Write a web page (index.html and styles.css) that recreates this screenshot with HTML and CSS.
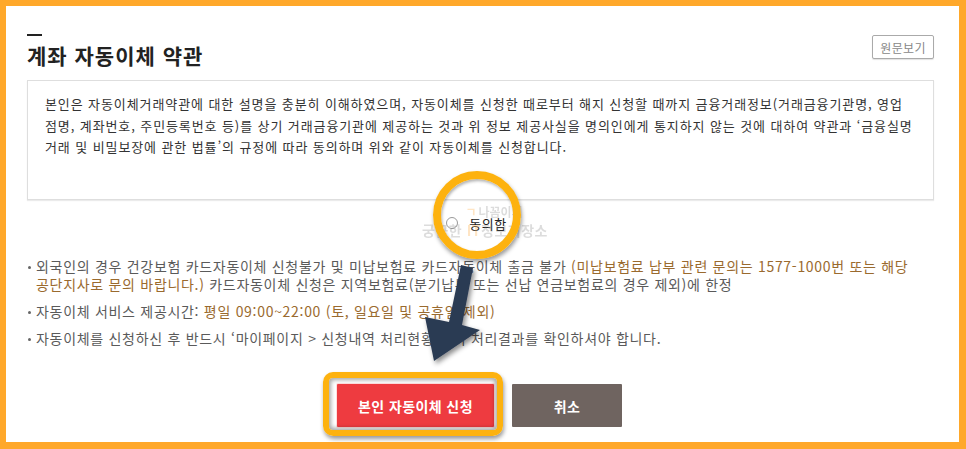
FILE: index.html
```html
<!DOCTYPE html>
<html lang="ko">
<head>
<meta charset="utf-8">
<title>계좌 자동이체 약관</title>
<link rel="stylesheet" href="styles.css">
</head>
<body>
<div class="frame">
  <div class="page">
    <div class="header">
      <div class="title-block">
        <span class="dash"></span>
        <h1 class="title">계좌 자동이체 약관</h1>
      </div>
      <button class="btn-origin" type="button">원문보기</button>
    </div>

    <div class="terms">
      본인은 자동이체거래약관에 대한 설명을 충분히 이해하였으며, 자동이체를 신청한 때로부터 해지 신청할 때까지 금융거래정보(거래금융기관명, 영업<br>
      점명, 계좌번호, 주민등록번호 등)를 상기 거래금융기관에 제공하는 것과 위 정보 제공사실을 명의인에게 통지하지 않는 것에 대하여 약관과 ‘금융실명<br>
      거래 및 비밀보장에 관한 법률’의 규정에 따라 동의하며 위와 같이 자동이체를 신청합니다.
    </div>

    <label class="agree">
      <span class="radio"></span>
      <span class="agree-text">동의함</span>
    </label>

    <ul class="notes">
      <li><span class="gray">외국인의 경우 건강보험 카드자동이체 신청불가 및 미납보험료 카드자동이체 출금 불가 </span><span class="brown">(미납보험료 납부 관련 문의는 1577-1000번 또는 해당<br>공단지사로 문의 바랍니다.)</span><span class="gray"> 카드자동이체 신청은 지역보험료(분기납부 또는 선납 연금보험료의 경우 제외)에 한정</span></li>
      <li><span class="gray">자동이체 서비스 제공시간: </span><span class="brown">평일 09:00~22:00 (토, 일요일 및 공휴일 제외)</span></li>
      <li><span class="gray">자동이체를 신청하신 후 반드시 ‘마이페이지 &gt; 신청내역 처리현황’에서 처리결과를 확인하셔야 합니다.</span></li>
    </ul>

    <div class="actions">
      <div class="btn-wrap">
        <button class="btn btn-apply" type="button">본인 자동이체 신청</button>
        <span class="highlight"></span>
      </div>
      <button class="btn btn-cancel" type="button">취소</button>
    </div>

    <div class="watermark">
      <span class="wm-top"><span class="wm-mark">ㄱ</span>나꼼이의</span>
      <span class="wm-bottom">궁금한 <span class="wm-it">IT</span>정보저장소</span>
    </div>
    <span class="ring"></span>
    <svg class="arrow" width="953" height="436" viewBox="0 0 953 436" aria-hidden="true">
      <defs>
        <filter id="sh" x="-50%" y="-50%" width="200%" height="200%">
          <feDropShadow dx="2" dy="3" stdDeviation="2.5" flood-color="#000" flood-opacity="0.45"/>
        </filter>
      </defs>
      <polygon filter="url(#sh)" fill="#2c3b52" points="455,259 467,262 456,319 474,324 428,355 419,311 443,316"/>
    </svg>
  </div>
</div>
</body>
</html>
```

FILE: styles.css
```css
* { box-sizing: border-box; }

html, body {
  margin: 0;
  padding: 0;
  background: #ffa82a;
}

body {
  font-family: "Noto Sans CJK KR", "Noto Sans", sans-serif;
  color: #333;
}

.frame {
  width: 966px;
  height: 449px;
  padding: 6px 7px 7px 6px;
  background: #ffa82a;
}

.page {
  position: relative;
  height: 100%;
  background: #fff;
  padding: 28px 25px 0 21px;
  overflow: hidden;
}

.header {
  display: flex;
  justify-content: space-between;
  align-items: flex-start;
}

.title-block {
  display: flex;
  flex-direction: column;
}

.dash {
  display: block;
  width: 15px;
  height: 2px;
  background: #222;
}

.title {
  margin: 5px 0 0;
  font-size: 21px;
  line-height: 28px;
  font-weight: 700;
  color: #222;
  letter-spacing: 1px;
}

.btn-origin {
  margin-top: 1px;
  height: 24px;
  padding: 0 7px;
  font-family: inherit;
  font-size: 12px;
  color: #888;
  background: #fff;
  border: 1px solid #aaa;
  border-radius: 2px;
  box-shadow: 0 1px 1px rgba(0, 0, 0, 0.12);
  letter-spacing: 0.4px;
}

.terms {
  margin-top: 11px;
  height: 120px;
  padding: 12px 17px;
  border: 1px solid #dedede;
  box-shadow: 0 1px 1px rgba(0, 0, 0, 0.08);
  font-size: 13px;
  line-height: 21.5px;
  color: #333;
  white-space: nowrap;
  letter-spacing: 0.9px;
}

.agree {
  display: flex;
  justify-content: center;
  align-items: center;
  gap: 11px;
  margin-top: 13px;
  height: 20px;
  padding-right: 8px;
}

.radio {
  width: 12px;
  height: 12px;
  border: 1px solid #999;
  border-radius: 50%;
  background: #fff;
}

.agree-text {
  font-size: 13px;
  color: #222;
  letter-spacing: 0.5px;
}

.notes {
  list-style: none;
  margin: 24px 0 0;
  padding: 0;
  font-size: 14px;
  line-height: 18px;
  letter-spacing: 0.7px;
}

.notes li {
  position: relative;
  padding-left: 9px;
  margin-bottom: 9px;
  white-space: nowrap;
}

.notes li::before {
  content: "";
  position: absolute;
  left: 1px;
  top: 9px;
  width: 3px;
  height: 3px;
  border-radius: 50%;
  background: #666;
}

.gray { color: #5a5a5a; }
.brown { color: #9a6a2e; }

.actions {
  display: flex;
  justify-content: center;
  gap: 18px;
  margin-top: 37px;
  padding-right: 2px;
}

.btn-wrap {
  position: relative;
}

.btn {
  height: 43px;
  border: none;
  font-family: inherit;
  font-size: 14px;
  font-weight: 700;
  color: #fff;
  border-radius: 1px;
  letter-spacing: 0.4px;
}

.btn-apply {
  width: 157px;
  background: #ee3b40;
  box-shadow: 0 0 0 1px rgba(255, 200, 200, 0.6);
}

.btn-cancel {
  width: 110px;
  background: #6f6460;
}

.highlight {
  position: absolute;
  top: -12px;
  left: -14px;
  right: -9px;
  bottom: -9px;
  border: 6px solid #fdb20f;
  border-radius: 10px;
  box-shadow: 1px 3px 4px rgba(0, 0, 0, 0.4), inset 0 0 4px 2px rgba(0, 0, 0, 0.35);
  pointer-events: none;
}

.ring {
  position: absolute;
  left: 427px;
  top: 165px;
  width: 88px;
  height: 88px;
  border: 8px solid #fdb20f;
  border-radius: 50%;
  box-shadow: 1px 3px 4px rgba(0, 0, 0, 0.4), inset 1px 2px 3px rgba(0, 0, 0, 0.3);
  pointer-events: none;
}

.watermark {
  position: absolute;
  left: 404px;
  top: 199px;
  width: 150px;
  display: flex;
  flex-direction: column;
  align-items: center;
  opacity: 0.25;
  pointer-events: none;
  font-weight: 700;
  color: #777;
}

.wm-top {
  font-size: 12px;
  line-height: 13px;
  padding-left: 18px;
}

.wm-mark {
  color: #ff9a1a;
  margin-right: 2px;
}

.wm-bottom {
  font-size: 14px;
  line-height: 18px;
  margin-top: 3px;
  letter-spacing: 0.5px;
}

.wm-it {
  color: #ff9a1a;
}

.arrow {
  position: absolute;
  left: 0;
  top: 0;
  pointer-events: none;
}
```
